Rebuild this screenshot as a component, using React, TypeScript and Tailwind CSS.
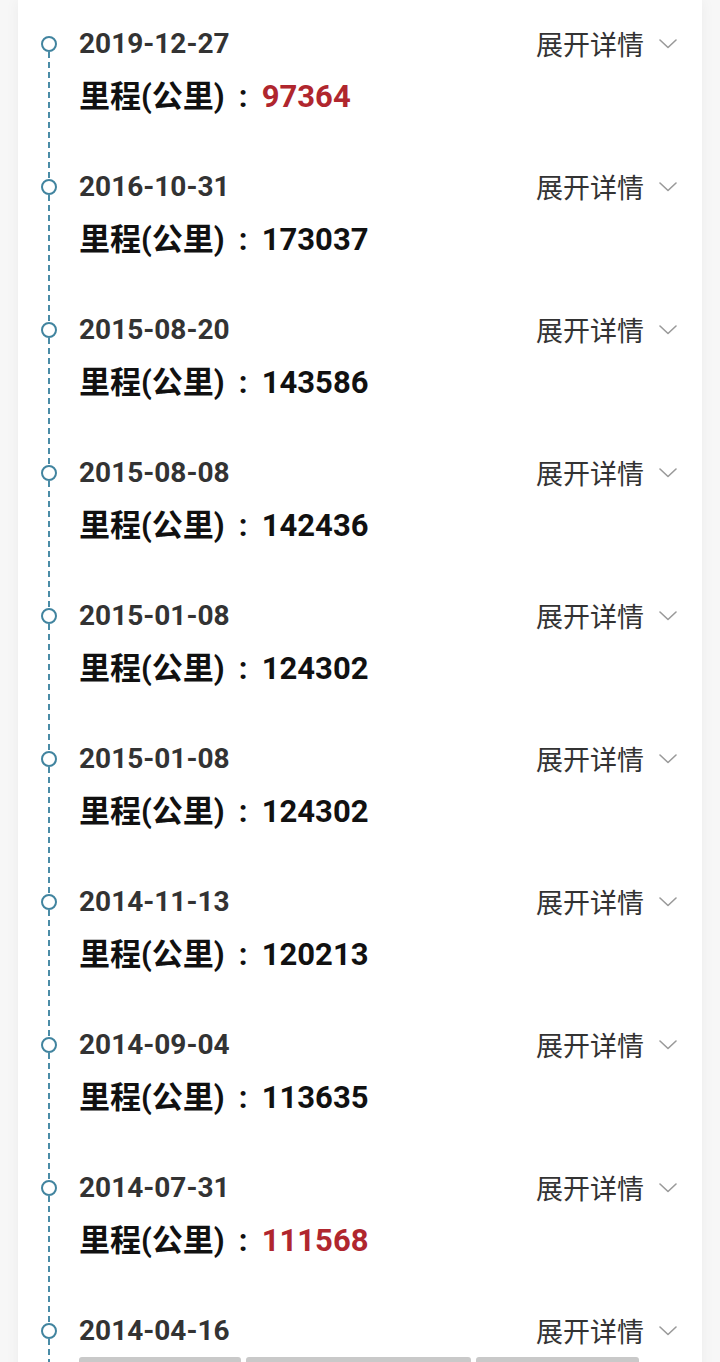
const records = [
	{ date: '2019-12-27', km: '97364', alert: true },
	{ date: '2016-10-31', km: '173037' },
	{ date: '2015-08-20', km: '143586' },
	{ date: '2015-08-08', km: '142436' },
	{ date: '2015-01-08', km: '124302' },
	{ date: '2015-01-08', km: '124302' },
	{ date: '2014-11-13', km: '120213' },
	{ date: '2014-09-04', km: '113635' },
	{ date: '2014-07-31', km: '111568', alert: true },
];

const Chevron = () => (
	<svg width="18" height="10" viewBox="0 0 18 10" fill="none" className="ml-[15px]">
		<path d="M1 1l8 7.5L17 1" stroke="#9a9a9a" strokeWidth="1.6" strokeLinecap="round" strokeLinejoin="round" />
	</svg>
);

const Dot = () => (
	<div className="h-[16px] w-[16px] shrink-0 rounded-full border-2 border-[#41849f] bg-white" />
);

const Line = () => (
	<div className="-mb-[8px] w-[2px] flex-1 bg-[repeating-linear-gradient(to_bottom,#4a8ca7_0_6px,transparent_6px_10px)]" />
);

const Header = ({ date }: { date: string }) => (
	<div className="flex h-[28px] items-center justify-between">
		<span className="font-['Roboto'] text-[28px] font-bold leading-[28px] text-[#333]">{date}</span>
		<span className="flex items-center font-['Noto_Sans_CJK_SC',sans-serif] text-[27px] leading-[28px] text-[#333]">
			展开详情
			<Chevron />
		</span>
	</div>
);

const Row = ({ date, km, alert }: { date: string; km: string; alert?: boolean }) => (
	<div className="flex h-[143px]">
		<div className="flex w-[38px] shrink-0 flex-col items-start pt-[6px]">
			<Dot />
			<div className="ml-[7px] flex flex-1 flex-col">
				<Line />
			</div>
		</div>
		<div className="flex-1">
			<Header date={date} />
			<p className="mt-[20px] font-['Roboto','Noto_Sans_CJK_SC',sans-serif] text-[31px] font-bold leading-[38px] text-[#111]">
				里程(公里)
				<span className="inline-block w-[37px] text-center">:</span>
				<span className={alert ? 'text-[#b0262e]' : ''}>{km}</span>
			</p>
		</div>
	</div>
);

const App = () => {
	return (
		<div className="h-[1362px] overflow-hidden bg-[#f7f7f7]">
			<div className="mx-[18px] min-h-full bg-white pl-[23px] pr-[25px] pt-[30px] shadow-[0_0_14px_rgba(0,0,0,0.05)]">
				{records.map((r, i) => (
					<Row key={i} {...r} />
				))}
				<div className="flex h-[143px]">
					<div className="flex w-[38px] shrink-0 flex-col items-start pt-[6px]">
						<Dot />
						<div className="ml-[7px] flex flex-1 flex-col">
							<Line />
						</div>
					</div>
					<div className="flex-1">
						<Header date="2014-04-16" />
						<div className="mt-[12px] flex gap-[5px] pr-[37px]">
							<div className="h-[20px] w-[162px] rounded-t-[3px] bg-[#c9c9c9]" />
							<div className="h-[20px] w-[225px] rounded-t-[3px] bg-[#c9c9c9]" />
							<div className="h-[20px] w-[163px] rounded-t-[3px] bg-[#c9c9c9]" />
						</div>
					</div>
				</div>
			</div>
		</div>
	);
};

export default App;
